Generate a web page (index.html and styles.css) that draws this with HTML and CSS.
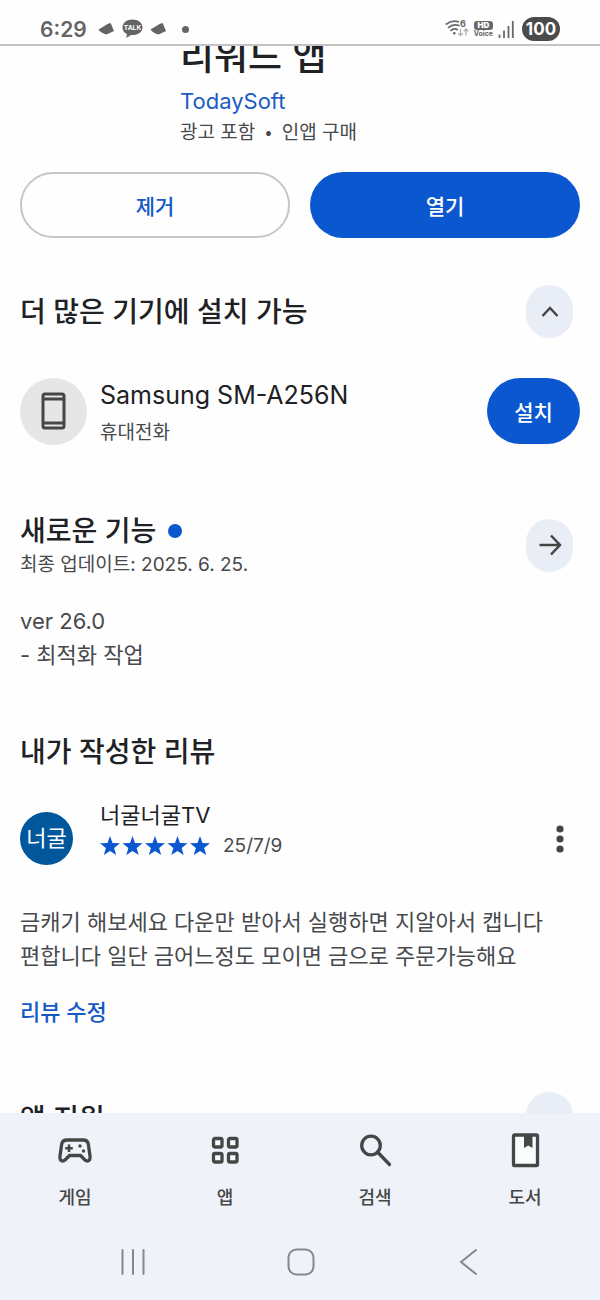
FILE: index.html
```html
<!DOCTYPE html>
<html lang="ko">
<head>
<meta charset="utf-8">
<meta name="viewport" content="width=device-width, initial-scale=1">
<title>리워드 앱</title>
<link rel="stylesheet" href="styles.css">
</head>
<body>
<header class="status">
  <div class="status-left">
    <span class="clock">6:29</span>
    <svg class="bird" viewBox="0 0 17 12" aria-hidden="true"><path d="M.5 6.500 L10 .8 L12.600 0 L13.300 1.500 L16 8 L8.500 11.500 Q3 10 .5 6.500 Z"/></svg>
    <svg class="talk" viewBox="0 0 22 20" aria-hidden="true"><path d="M11 0C5 0 .5 3.700 .5 8.300c0 3 1.900 5.600 4.700 7L4.500 19.500l5-3.200c7 .5 12-3.300 12-8S17 0 11 0Z"/><text x="11" y="11">TALK</text></svg>
    <svg class="bird" viewBox="0 0 17 12" aria-hidden="true"><path d="M.5 6.500 L10 .8 L12.600 0 L13.300 1.500 L16 8 L8.500 11.500 Q3 10 .5 6.500 Z"/></svg>
    <span class="status-dot"></span>
  </div>
  <div class="status-right">
    <svg class="wifi" viewBox="0 0 24 20" aria-hidden="true"><g fill="none" stroke="#696969" stroke-width="1.700"><path d="M.8 5.500Q7 .5 14 3"/><path d="M3 8.800Q8.500 4 14.500 6.800"/><path d="M5.500 11.800Q9 8.500 12.800 11"/></g><circle cx="9.300" cy="14.300" r="1.300" fill="#696969"/><text x="15" y="8">6</text><path d="M15.500 10v6.500m-2.300-2.300l2.300 2.300l2.300-2.300M21 16.500V10m-2.300 2.300L21 10l2.300 2.300" fill="none" stroke="#b0b0b0" stroke-width="1.300"/></svg>
    <span class="volte"><b>HD</b><span>Voice</span></span>
    <svg class="signal" viewBox="0 0 16 17" aria-hidden="true"><path d="M1.500 13.500V17M6 9.500V17M10.500 5V17M14.800 0V17" stroke="#696969" stroke-width="1.800"/></svg>
    <span class="battery">100</span>
  </div>
</header>
<main class="content">
  <section class="app-head">
    <h1>리워드 앱</h1>
    <a class="developer" href="#">TodaySoft</a>
    <p class="small facts"><span>광고 포함</span><span>•</span><span>인앱 구매</span></p>
  </section>
  <div class="actions">
    <button class="btn outline" type="button">제거</button>
    <button class="btn filled" type="button">열기</button>
  </div>
  <section class="devices">
    <div class="section-head">
      <h2>더 많은 기기에 설치 가능</h2>
      <button class="round" type="button" aria-label="접기"><svg viewBox="0 0 24 24"><path d="M4.500 16l7.500-8 7.500 8"/></svg></button>
    </div>
    <div class="device">
      <span class="device-icon"><svg viewBox="0 0 26 38" aria-hidden="true"><rect x="2" y="2" width="21" height="34" rx="2"/><path d="M2 7H23M2 31H23"/></svg></span>
      <div class="device-text">
        <p class="device-name">Samsung SM-A256N</p>
        <p class="small">휴대전화</p>
      </div>
      <button class="btn filled install" type="button">설치</button>
    </div>
  </section>
  <section class="news">
    <div class="section-head">
      <div>
        <h2>새로운 기능<span class="new-dot"></span></h2>
        <p class="small">최종 업데이트: 2025. 6. 25.</p>
      </div>
      <button class="round" type="button" aria-label="새로운 기능 더보기"><svg viewBox="0 0 24 24"><path d="M1.500 12H22M13 2.500L22 12L13 21.500"/></svg></button>
    </div>
    <p class="body-text">ver 26.0<br>- 최적화 작업</p>
  </section>
  <section class="review">
    <h2>내가 작성한 리뷰</h2>
    <div class="reviewer">
      <span class="avatar">너굴</span>
      <div class="reviewer-text">
        <p class="reviewer-name">너굴너굴TV</p>
        <div class="rating">
          <svg class="stars" viewBox="0 0 110 20" role="img" aria-label="별 5개"><defs><path id="star" d="M10 0L12.500 6.900L20 7.300L14.100 11.900L16.200 19L10 15L3.800 19L5.900 11.900L0 7.300L7.500 6.900Z"/></defs><use href="#star"/><use href="#star" x="22.500"/><use href="#star" x="45"/><use href="#star" x="67.500"/><use href="#star" x="90"/></svg>
          <span class="date">25/7/9</span>
        </div>
      </div>
      <button class="more" type="button" aria-label="옵션"><svg viewBox="0 0 8 28"><circle cx="4" cy="4" r="3.600"/><circle cx="4" cy="14" r="3.600"/><circle cx="4" cy="24" r="3.600"/></svg></button>
    </div>
    <p class="body-text">금캐기 해보세요 다운만 받아서 실행하면 지알아서 캡니다 편합니다 일단 금어느정도 모이면 금으로 주문가능해요</p>
    <a class="edit" href="#">리뷰 수정</a>
  </section>
  <section class="support">
    <div class="section-head">
      <h2>앱 지원</h2>
      <button class="round" type="button" aria-label="펼치기"><svg viewBox="0 0 24 24"><path d="M4.500 8l7.500 8 7.500-8"/></svg></button>
    </div>
  </section>
</main>
<footer class="bottom">
  <nav class="tabs">
    <a href="#"><svg viewBox="0 0 36 36" aria-hidden="true"><path class="line" d="M10 8H26Q30.500 8 31.300 12L33 24Q33.500 29 30.500 29Q29 29 28 28L23.500 23.500H12.500L8 28Q7 29 5.500 29Q2.500 29 3 24L4.700 12Q5.500 8 10 8Z"/><path class="thin" d="M12 12.500V20M8.200 16.300H15.800"/><circle cx="23" cy="14" r="1.700"/><circle cx="26.500" cy="19" r="1.700"/></svg>게임</a>
    <a href="#"><svg viewBox="0 0 36 36" aria-hidden="true"><g class="line pale"><rect x="6.500" y="6.500" width="8.500" height="8.500" rx="1.500"/><rect x="21.500" y="6.500" width="8.500" height="8.500" rx="1.500"/><rect x="6.500" y="21.500" width="8.500" height="8.500" rx="1.500"/><rect x="21.500" y="21.500" width="8.500" height="8.500" rx="1.500"/></g></svg>앱</a>
    <a href="#"><svg viewBox="0 0 36 36" aria-hidden="true"><g class="line"><circle cx="14" cy="13.500" r="9.300"/><path d="M20.500 20L32.500 32.500"/></g></svg>검색</a>
    <a href="#"><svg viewBox="0 0 36 36" aria-hidden="true"><rect class="line pale" x="6.500" y="3" width="24" height="30.500" rx="1"/><path d="M17 3H25.500V16L21.200 13.500L17 16Z"/></svg>도서</a>
  </nav>
  <div class="system">
    <button type="button" aria-label="최근 앱"><svg viewBox="0 0 28 28"><path d="M3.500 2V26M14 2V26M24.500 2V26"/></svg></button>
    <button type="button" aria-label="홈"><svg viewBox="0 0 28 28"><rect x="1.500" y="1.500" width="25" height="25" rx="8"/></svg></button>
    <button type="button" aria-label="뒤로"><svg viewBox="0 0 28 28"><path d="M22 2L7 14L22 26"/></svg></button>
  </div>
</footer>
</body>
</html>
```
FILE: styles.css
```css
* { box-sizing: border-box; }
body {
  margin: 0;
  height: 100vh;
  display: flex;
  flex-direction: column;
  background: #fefefe;
  color: #202124;
  font-family: Inter, "Noto Sans CJK KR", sans-serif;
  word-break: keep-all;
}
h1, h2, p { margin: 0; }
a { text-decoration: none; }
button { border: 0; padding: 0; background: none; font: inherit; color: inherit; cursor: pointer; }
svg { display: block; }
h1, .btn, .facts, .tabs { font-family: "Noto Sans CJK KR", sans-serif; }

.status {
  flex: none;
  height: 46px;
  padding: 14px 40px 0;
  display: flex;
  justify-content: space-between;
  border-bottom: 2px solid #c4c4c4;
  color: #646464;
}
.status-left, .status-right { display: flex; align-items: center; height: 30px; }
.status-left { gap: 7px; }
.clock { font-size: 21px; font-weight: 600; margin-right: 4px; }
.bird { width: 17px; height: 12px; fill: #646464; }
.talk { width: 21px; height: 20px; fill: #646464; }
.talk text { fill: #fff; font-size: 7px; font-weight: 700; text-anchor: middle; }
.status-dot { width: 7px; height: 7px; margin-left: 8px; border-radius: 50%; background: #646464; }
.status-right { gap: 5px; }
.wifi { width: 24px; height: 20px; }
.wifi text { font-size: 9px; font-weight: 700; fill: #696969; }
.volte { display: flex; flex-direction: column; align-items: center; font-size: 7px; line-height: 8px; font-weight: 700; }
.volte b { width: 19px; border-radius: 3px; background: #696969; color: #fff; font-size: 8px; line-height: 9px; text-align: center; }
.signal { width: 16px; height: 17px; }
.battery {
  width: 38px;
  height: 24px;
  margin-left: 3px;
  border-radius: 12px;
  background: #4b4b4b;
  color: #fff;
  font-size: 17px;
  font-weight: 700;
  line-height: 24px;
  text-align: center;
}

.content { flex: 1; min-height: 0; overflow: hidden; padding: 0 20px; }
.small { font-size: 19px; line-height: 28px; color: #47494c; }
h2 { font-size: 28px; line-height: 40px; font-weight: 500; }
.app-head { margin-top: -20px; padding-left: 160px; }
h1 { font-size: 37px; line-height: 56px; font-weight: 500; margin-bottom: 3px; }
.developer { display: block; font-size: 22px; line-height: 32px; color: #1a5cc2; }
.facts { display: flex; gap: 10px; margin-bottom: 27px; }

.actions { display: grid; grid-template-columns: 1fr 1fr; gap: 20px; }
.btn { height: 66px; border-radius: 33px; font-size: 21px; line-height: 30px; font-weight: 500; }
.outline { border: 2px solid #c6c6c6; color: #1559c5; }
.filled { background: #0b57d0; color: #fff; }

.section-head { display: flex; justify-content: space-between; align-items: center; padding-right: 7px; }
.round {
  flex: none;
  width: 47px;
  height: 53px;
  border-radius: 24px;
  background: #e8edf6;
  display: grid;
  place-items: center;
}
.round svg { width: 24px; height: 24px; fill: none; stroke: #444; stroke-width: 2.500; }
.devices { margin-top: 47px; }
.device { display: flex; align-items: center; margin-top: 37px; }
.device-icon { width: 67px; height: 67px; border-radius: 50%; background: #e6e6e6; display: grid; place-items: center; }
.device-icon svg { width: 26px; height: 38px; fill: none; stroke: #444746; stroke-width: 3; }
.device-text { flex: 1; padding-left: 13px; }
.device-name { font-size: 25px; line-height: 40px; margin-bottom: 4px; }
.install { width: 93px; }

.news { margin-top: 64px; }
.news .section-head h2 { display: flex; align-items: center; gap: 12px; }
.new-dot { width: 14px; height: 14px; border-radius: 50%; background: #0b57d0; }
.body-text { font-size: 22px; line-height: 34px; color: #47494c; }
.news .body-text { margin-top: 25px; }

.review { margin-top: 60px; }
.reviewer { display: flex; align-items: flex-end; margin-top: 27px; }
.avatar {
  width: 53px;
  height: 53px;
  border-radius: 50%;
  background: #01579b;
  color: #fff;
  font-size: 22px;
  line-height: 53px;
  text-align: center;
}
.reviewer-text { flex: 1; padding: 0 0 4px 27px; }
.reviewer-name { font-size: 22px; line-height: 32px; }
.rating { display: flex; align-items: center; gap: 13px; }
.stars { width: 110px; height: 20px; fill: #0b57d0; }
.date { font-size: 19px; line-height: 30px; color: #47494c; }
.more { width: 40px; height: 53px; display: grid; place-items: center; }
.more svg { width: 8px; height: 28px; fill: #444; }
.review .body-text { margin-top: 40px; }
.edit { display: block; width: fit-content; margin-top: 23px; font-size: 22px; line-height: 32px; font-weight: 500; color: #1559c5; }
.support { margin-top: 64px; }

.bottom { flex: none; background: #eff2f8; padding-bottom: 24px; }
.tabs { display: grid; grid-template-columns: repeat(4, 1fr); padding-top: 19px; }
.tabs a {
  display: flex;
  flex-direction: column;
  align-items: center;
  gap: 14px;
  font-size: 18px;
  line-height: 28px;
  font-weight: 500;
  color: #444746;
}
.tabs svg { width: 36px; height: 36px; fill: #444746; }
.tabs .line { fill: none; stroke: #444746; stroke-width: 3.300; stroke-linecap: round; }
.tabs .pale { fill: #fafbfd; }
.tabs .thin { stroke: #444746; stroke-width: 2.500; }
.system { display: flex; justify-content: space-between; padding: 0 118px 0 119px; margin-top: 38px; }
.system button { width: 28px; height: 28px; }
.system svg { width: 28px; height: 28px; fill: none; stroke: #85878b; stroke-width: 2; stroke-linecap: round; }
```
